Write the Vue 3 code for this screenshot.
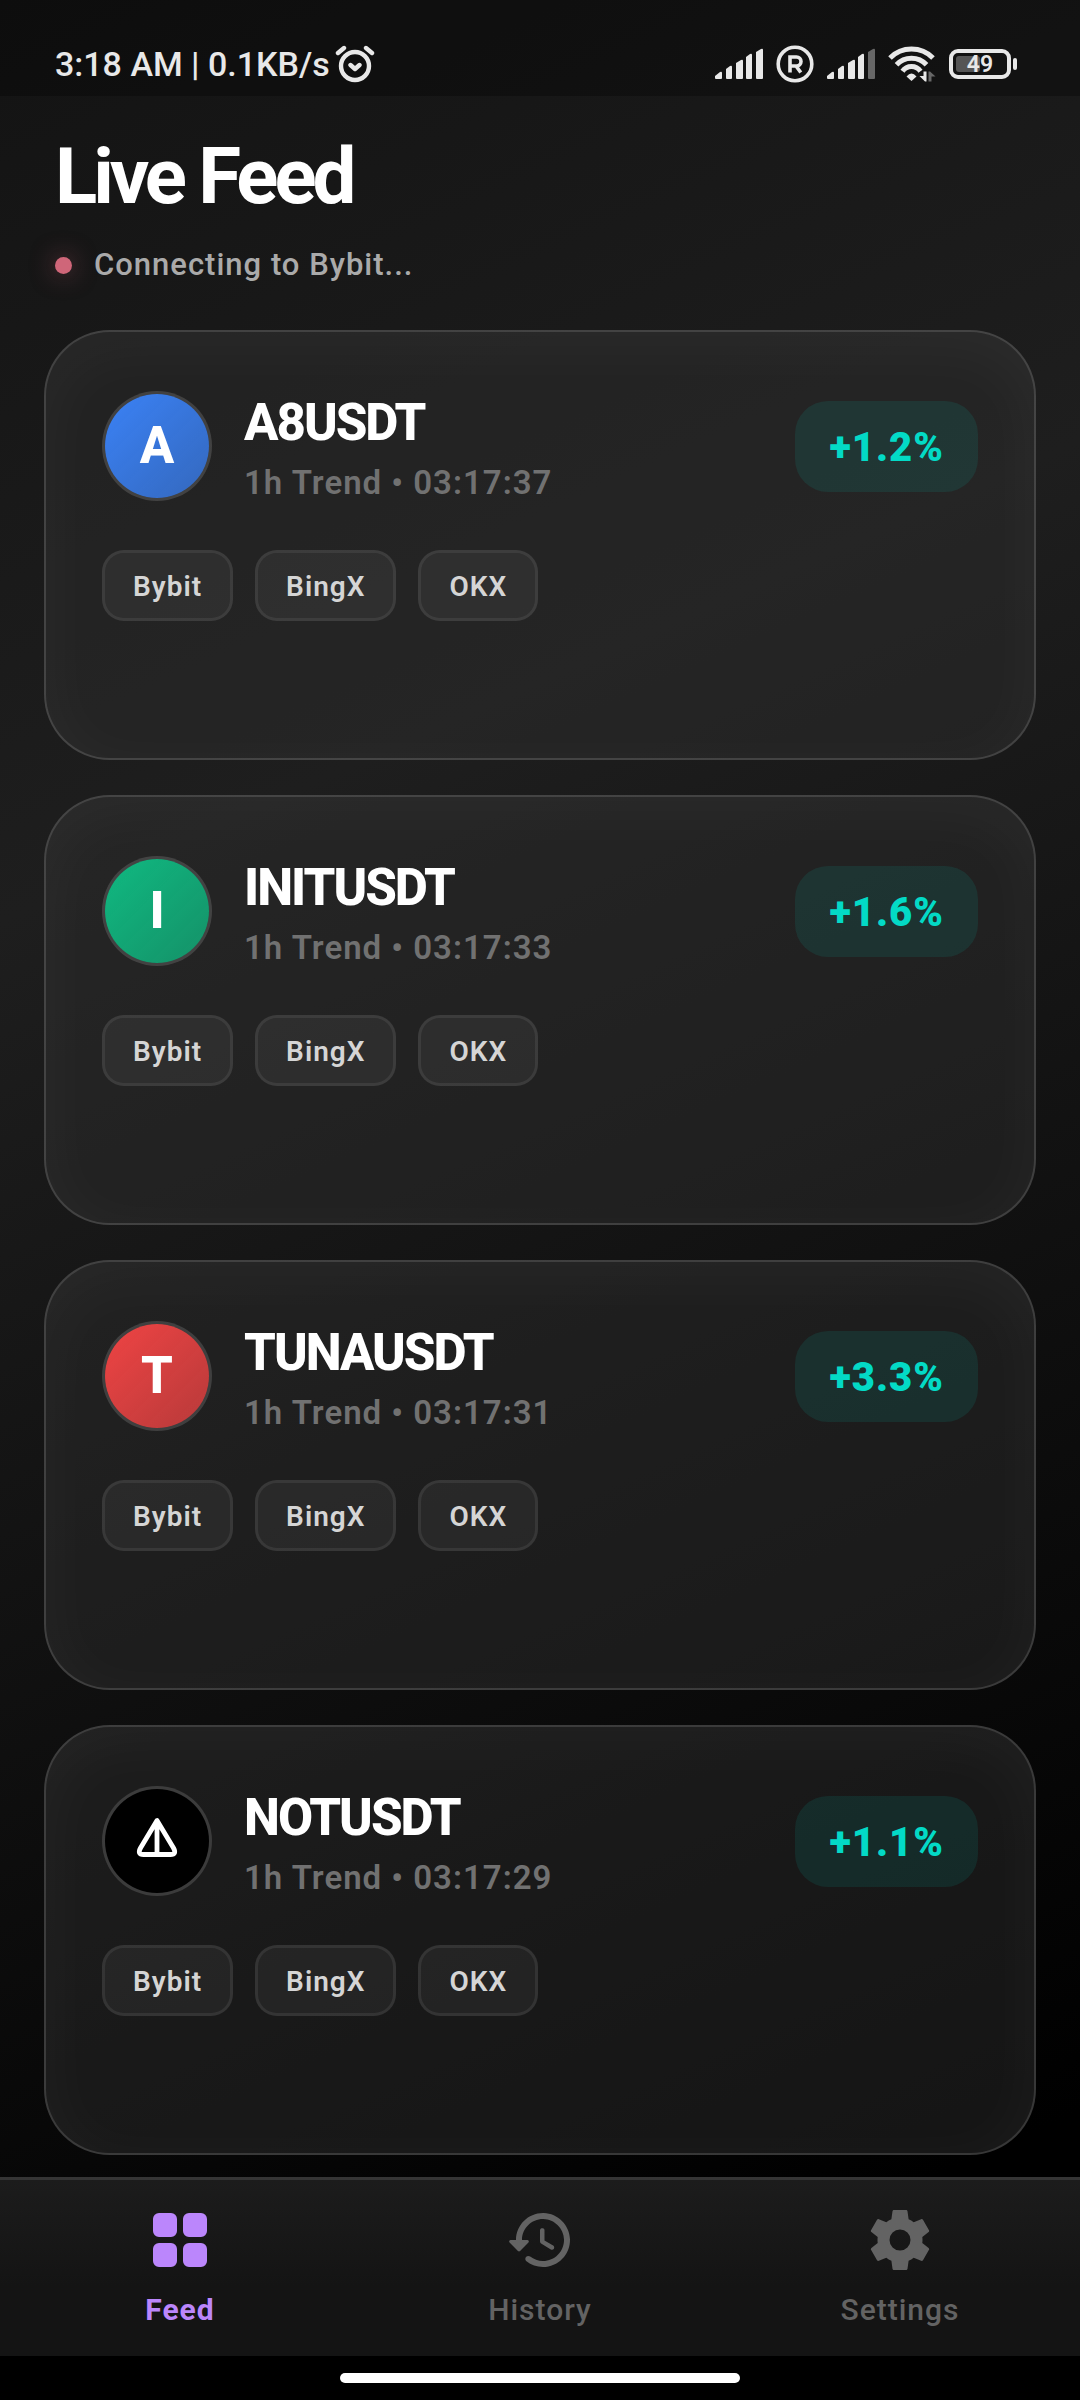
<template>
  <div class="app">
    <header class="status-bar">
      <div class="status-left">
        <span>3:18 AM | 0.1KB/s</span>
        <svg class="alarm" viewBox="0 0 40 38" width="40" height="38" aria-label="Alarm">
          <g fill="none" stroke="currentColor" stroke-width="4.4" stroke-linecap="round" stroke-linejoin="round">
            <circle cx="20" cy="21" r="14" />
            <path d="M3 8 9 3M37 8 31 3M15.500 20l4.500 4 4.500-4" />
          </g>
        </svg>
      </div>
      <div class="status-right">
        <svg viewBox="0 0 48 31" width="48" height="31" aria-label="Signal">
          <path v-for="bar in bars" :key="bar" :d="bar" fill="currentColor" />
        </svg>
        <svg viewBox="0 0 38 38" width="38" height="38" aria-label="Roaming">
          <circle cx="19" cy="19" r="16.8" fill="none" stroke="currentColor" stroke-width="3.6" />
          <path d="M14 27.5V12h6.5a4.2 4.2 0 0 1 0 9H14M20 21l4.8 6.5" fill="none" stroke="currentColor" stroke-width="3.6" />
        </svg>
        <svg viewBox="0 0 48 31" width="48" height="31" aria-label="Signal">
          <path v-for="(bar, i) in bars" :key="bar" :d="bar" fill="currentColor" :class="{ dim: i === 4 }" />
        </svg>
        <svg class="wifi" viewBox="0 0 48 36" width="48" height="36" aria-label="Wi-Fi">
          <g fill="none" stroke="currentColor" stroke-width="5">
            <path d="M2 12A30.3 30.3 0 0 1 45 12" />
            <path d="M8.5 18.8A20.5 20.5 0 0 1 38.5 18.8" />
            <path d="M14.5 25.2A11 11 0 0 1 32.5 25.2" />
          </g>
          <path d="M23.5 35 18.500 30.500q5-6 10 0z" fill="currentColor" />
          <path d="M35.500 25.500h3v10h-1.500l-5.500-5.500h4z" fill="currentColor" />
          <path d="M40.500 35.500h3v-5h4l-5.500-5h-1.500z" fill="currentColor" class="dim" />
        </svg>
        <div class="battery">
          <div class="battery-body">
            <span class="battery-fill" :style="{ width: battery + '%' }"></span>
            <span class="battery-text">{{ battery }}</span>
          </div>
          <span class="battery-tip"></span>
        </div>
      </div>
    </header>

    <main class="feed">
      <div class="feed-header">
        <h1>Live Feed</h1>
        <p class="connection"><span class="dot"></span>Connecting to Bybit...</p>
      </div>

      <article v-for="item in signals" :key="item.symbol" class="card">
        <div class="card-top">
          <div class="avatar" :class="item.color">
            <svg v-if="item.color === 'black'" viewBox="0 0 104 104" width="104" height="104" aria-hidden="true">
              <path d="M52 31.500 35.500 59q-3.500 6.500 3 6.500h27q6.500 0 3-6.500zM52 33v32" fill="none" stroke="#fff" stroke-width="4.800" stroke-linejoin="round" />
            </svg>
            <template v-else>{{ item.symbol[0] }}</template>
          </div>
          <div class="info">
            <h2>{{ item.symbol }}</h2>
            <p>1h Trend • {{ item.time }}</p>
          </div>
          <span class="change">{{ item.change }}</span>
        </div>
        <ul class="exchanges">
          <li v-for="name in exchanges" :key="name">{{ name }}</li>
        </ul>
      </article>
    </main>

    <nav class="tabs">
      <button
        v-for="tab in tabs"
        :key="tab.name"
        type="button"
        :class="{ active: activeTab === tab.name }"
        @click="activeTab = tab.name"
      >
        <svg viewBox="0 0 24 24" width="72" height="72" aria-hidden="true">
          <path :d="tab.icon" fill="currentColor" />
        </svg>
        <span>{{ tab.name }}</span>
      </button>
    </nav>
    <div class="home-area"><span class="home-bar"></span></div>
  </div>
</template>

<script setup>
import { ref } from 'vue'

const battery = 49
const activeTab = ref('Feed')

// Signal strength bars, shortest to tallest
const bars = [
  'M0 28l5-4q2-1 2 1v5q0 1-1 1H1q-1 0-1-1z',
  'M11 21l4-3q2-1 2 1v11q0 1-1 1h-4q-1 0-1-1z',
  'M21 15l5-3q2-1 2 1v17q0 1-1 1h-5q-1 0-1-1z',
  'M31 9l4-3q2-1 2 1v23q0 1-1 1h-4q-1 0-1-1z',
  'M41 4l5-3q2-1 2 1v28q0 1-1 1h-5q-1 0-1-1z'
]

const exchanges = ['Bybit', 'BingX', 'OKX']

const signals = [
  { symbol: 'A8USDT', time: '03:17:37', change: '+1.2%', color: 'blue' },
  { symbol: 'INITUSDT', time: '03:17:33', change: '+1.6%', color: 'green' },
  { symbol: 'TUNAUSDT', time: '03:17:31', change: '+3.3%', color: 'red' },
  { symbol: 'NOTUSDT', time: '03:17:29', change: '+1.1%', color: 'black' }
]

const tabs = [
  {
    name: 'Feed',
    icon: 'M5 3h4a2 2 0 0 1 2 2v4a2 2 0 0 1-2 2H5a2 2 0 0 1-2-2V5a2 2 0 0 1 2-2zM15 3h4a2 2 0 0 1 2 2v4a2 2 0 0 1-2 2h-4a2 2 0 0 1-2-2V5a2 2 0 0 1 2-2zM5 13h4a2 2 0 0 1 2 2v4a2 2 0 0 1-2 2H5a2 2 0 0 1-2-2v-4a2 2 0 0 1 2-2zM15 13h4a2 2 0 0 1 2 2v4a2 2 0 0 1-2 2h-4a2 2 0 0 1-2-2v-4a2 2 0 0 1 2-2z'
  },
  {
    name: 'History',
    icon: 'M13.26 3C8.17 2.86 4 6.95 4 12H2.21c-.45 0-.67.54-.35.85l2.79 2.8c.2.2.51.2.71 0l2.79-2.8c.31-.31.09-.85-.36-.85H6c0-3.9 3.18-7.05 7.1-7 3.72.05 6.85 3.18 6.9 6.9.05 3.91-3.1 7.1-7 7.1-1.61 0-3.1-.55-4.28-1.48-.4-.31-.96-.28-1.32.08-.42.42-.39 1.13.08 1.49C9 20.29 10.91 21 13 21c5.05 0 9.14-4.17 9-9.26-.13-4.69-4.05-8.61-8.74-8.74zm-.51 5c-.41 0-.75.34-.75.75v3.68c0 .35.19.68.49.86l3.12 1.85c.36.21.82.09 1.03-.26.21-.36.09-.82-.26-1.03l-2.88-1.71v-3.4c0-.4-.34-.74-.75-.74z'
  },
  {
    name: 'Settings',
    icon: 'M12 15.5A3.5 3.5 0 0 1 8.5 12 3.5 3.5 0 0 1 12 8.500 3.5 3.5 0 0 1 15.500 12 3.5 3.5 0 0 1 12 15.500M19.430 12.970C19.470 12.650 19.500 12.330 19.500 12S19.470 11.340 19.430 11L21.540 9.370C21.730 9.220 21.780 8.950 21.660 8.730L19.660 5.270C19.540 5.050 19.270 4.960 19.050 5.050L16.560 6.050C16.040 5.660 15.500 5.320 14.870 5.070L14.500 2.420C14.460 2.180 14.250 2 14 2H10C9.750 2 9.540 2.180 9.500 2.420L9.130 5.070C8.500 5.320 7.960 5.660 7.440 6.050L4.950 5.050C4.730 4.960 4.460 5.050 4.340 5.270L2.340 8.730C2.210 8.950 2.270 9.220 2.460 9.370L4.570 11C4.530 11.340 4.500 11.670 4.500 12S4.530 12.650 4.570 12.970L2.460 14.630C2.270 14.780 2.210 15.050 2.340 15.270L4.340 18.730C4.460 18.950 4.730 19.030 4.950 18.950L7.440 17.940C7.960 18.340 8.500 18.680 9.130 18.930L9.500 21.580C9.540 21.820 9.750 22 10 22H14C14.250 22 14.460 21.820 14.500 21.580L14.870 18.930C15.500 18.670 16.040 18.340 16.560 17.940L19.050 18.950C19.270 19.030 19.540 18.950 19.660 18.730L21.660 15.270C21.780 15.050 21.730 14.780 21.540 14.630z'
  }
]
</script>

<style>
body {
  background: #000;
}
</style>

<style scoped>
* {
  box-sizing: border-box;
  margin: 0;
  padding: 0;
}

.app {
  display: flex;
  flex-direction: column;
  min-height: 100vh;
  background: linear-gradient(156deg, #131313 0%, #1e1e1e 32%, #000 90%);
  color: #fff;
  font-family: Roboto, "Liberation Sans", sans-serif;
}

/* Status bar */
.status-bar {
  display: flex;
  align-items: center;
  justify-content: space-between;
  height: 96px;
  padding: 31px 63px 0 55px;
  background: rgba(0, 0, 0, 0.28);
  color: #e8e8e8;
}

.status-left {
  display: flex;
  align-items: center;
  gap: 5px;
  font-size: 34px;
  font-weight: 500;
  line-height: 42px;
}

.status-right {
  display: flex;
  align-items: center;
  gap: 13px;
}

.dim {
  opacity: 0.4;
}

.battery {
  display: flex;
  align-items: center;
  gap: 2px;
}

.battery-body {
  position: relative;
  width: 62px;
  height: 30px;
  padding: 3px;
  border: 4px solid currentColor;
  border-radius: 9px;
}

.battery-fill {
  display: block;
  height: 100%;
  border-radius: 3px;
  background: #555;
}

.battery-text {
  position: absolute;
  inset: 0;
  font-size: 23px;
  font-weight: 600;
  line-height: 23px;
  text-align: center;
}

.battery-tip {
  width: 4px;
  height: 12px;
  border-radius: 2px;
  background: currentColor;
}

/* Feed */
.feed {
  display: flex;
  flex: 1;
  flex-direction: column;
  gap: 35px;
  padding: 36px 44px 22px;
}

.feed-header {
  padding: 0 11px 12px;
}

h1 {
  margin-bottom: 25px;
  font-size: 78px;
  font-weight: 700;
  line-height: 90px;
  letter-spacing: -4px;
}

.connection {
  display: flex;
  align-items: center;
  gap: 22px;
  color: #aaa;
  font-size: 31px;
  font-weight: 500;
  line-height: 36px;
  letter-spacing: 1px;
}

.dot {
  width: 17px;
  height: 17px;
  border-radius: 50%;
  background: #cf6679;
  box-shadow: 0 0 24px rgba(207, 102, 121, 0.5);
}

.card {
  padding: 58px 56px 137px;
  border: 2px solid rgba(255, 255, 255, 0.15);
  border-radius: 66px;
  background: rgba(46, 46, 46, 0.45);
  box-shadow: inset 0 14px 70px rgba(255, 255, 255, 0.04);
}

.card-top {
  display: flex;
  align-items: center;
  margin-bottom: 48px;
}

.avatar {
  display: flex;
  align-items: center;
  justify-content: center;
  width: 110px;
  height: 110px;
  margin-right: 32px;
  border: 3px solid rgba(255, 255, 255, 0.14);
  border-radius: 50%;
  background-clip: padding-box;
  font-size: 51px;
  font-weight: 800;
  line-height: 60px;
}

.blue {
  background-image: linear-gradient(135deg, #3b82f6, #3b82f6bb);
}

.green {
  background-image: linear-gradient(135deg, #10b981, #10b981bb);
}

.red {
  background-image: linear-gradient(135deg, #ef4444, #ef4444bb);
}

.black {
  background-color: #000;
}

.info {
  flex: 1;
}

h2 {
  margin-bottom: 8px;
  font-size: 51px;
  font-weight: 800;
  line-height: 66px;
  letter-spacing: -2px;
}

.info p {
  color: #717171;
  font-size: 33px;
  font-weight: 600;
  line-height: 38px;
  letter-spacing: 1px;
}

.change {
  padding: 23px 34px 21px;
  border-radius: 33px;
  background: rgba(3, 218, 198, 0.1);
  color: #03dac6;
  font-size: 40px;
  font-weight: 900;
  line-height: 47px;
  letter-spacing: 1px;
}

.exchanges {
  display: flex;
  gap: 22px;
  list-style: none;
}

.exchanges li {
  padding: 17px 28px 15px;
  border: 3px solid rgba(255, 255, 255, 0.07);
  border-radius: 22px;
  background: rgba(255, 255, 255, 0.05);
  color: #d5d5d5;
  font-size: 28px;
  font-weight: 600;
  line-height: 33px;
  letter-spacing: 1px;
}

/* Bottom navigation */
.tabs {
  display: grid;
  grid-template-columns: repeat(3, 1fr);
  border-top: 3px solid #353535;
  background: linear-gradient(180deg, #1c1c1c, #141414 60%);
}

.tabs button {
  display: flex;
  flex-direction: column;
  align-items: center;
  gap: 16px;
  padding: 24px 0 28px;
  border: none;
  background: none;
  color: #636363;
  font-family: inherit;
  font-size: 30px;
  font-weight: 500;
  line-height: 36px;
  letter-spacing: 1px;
  cursor: pointer;
}

.tabs button.active {
  color: #bb86fc;
  font-weight: 700;
}

.home-area {
  display: flex;
  justify-content: center;
  padding: 17px 0;
  background: #000;
}

.home-bar {
  width: 37%;
  height: 10px;
  border-radius: 5px;
  background: #fff;
}
</style>
